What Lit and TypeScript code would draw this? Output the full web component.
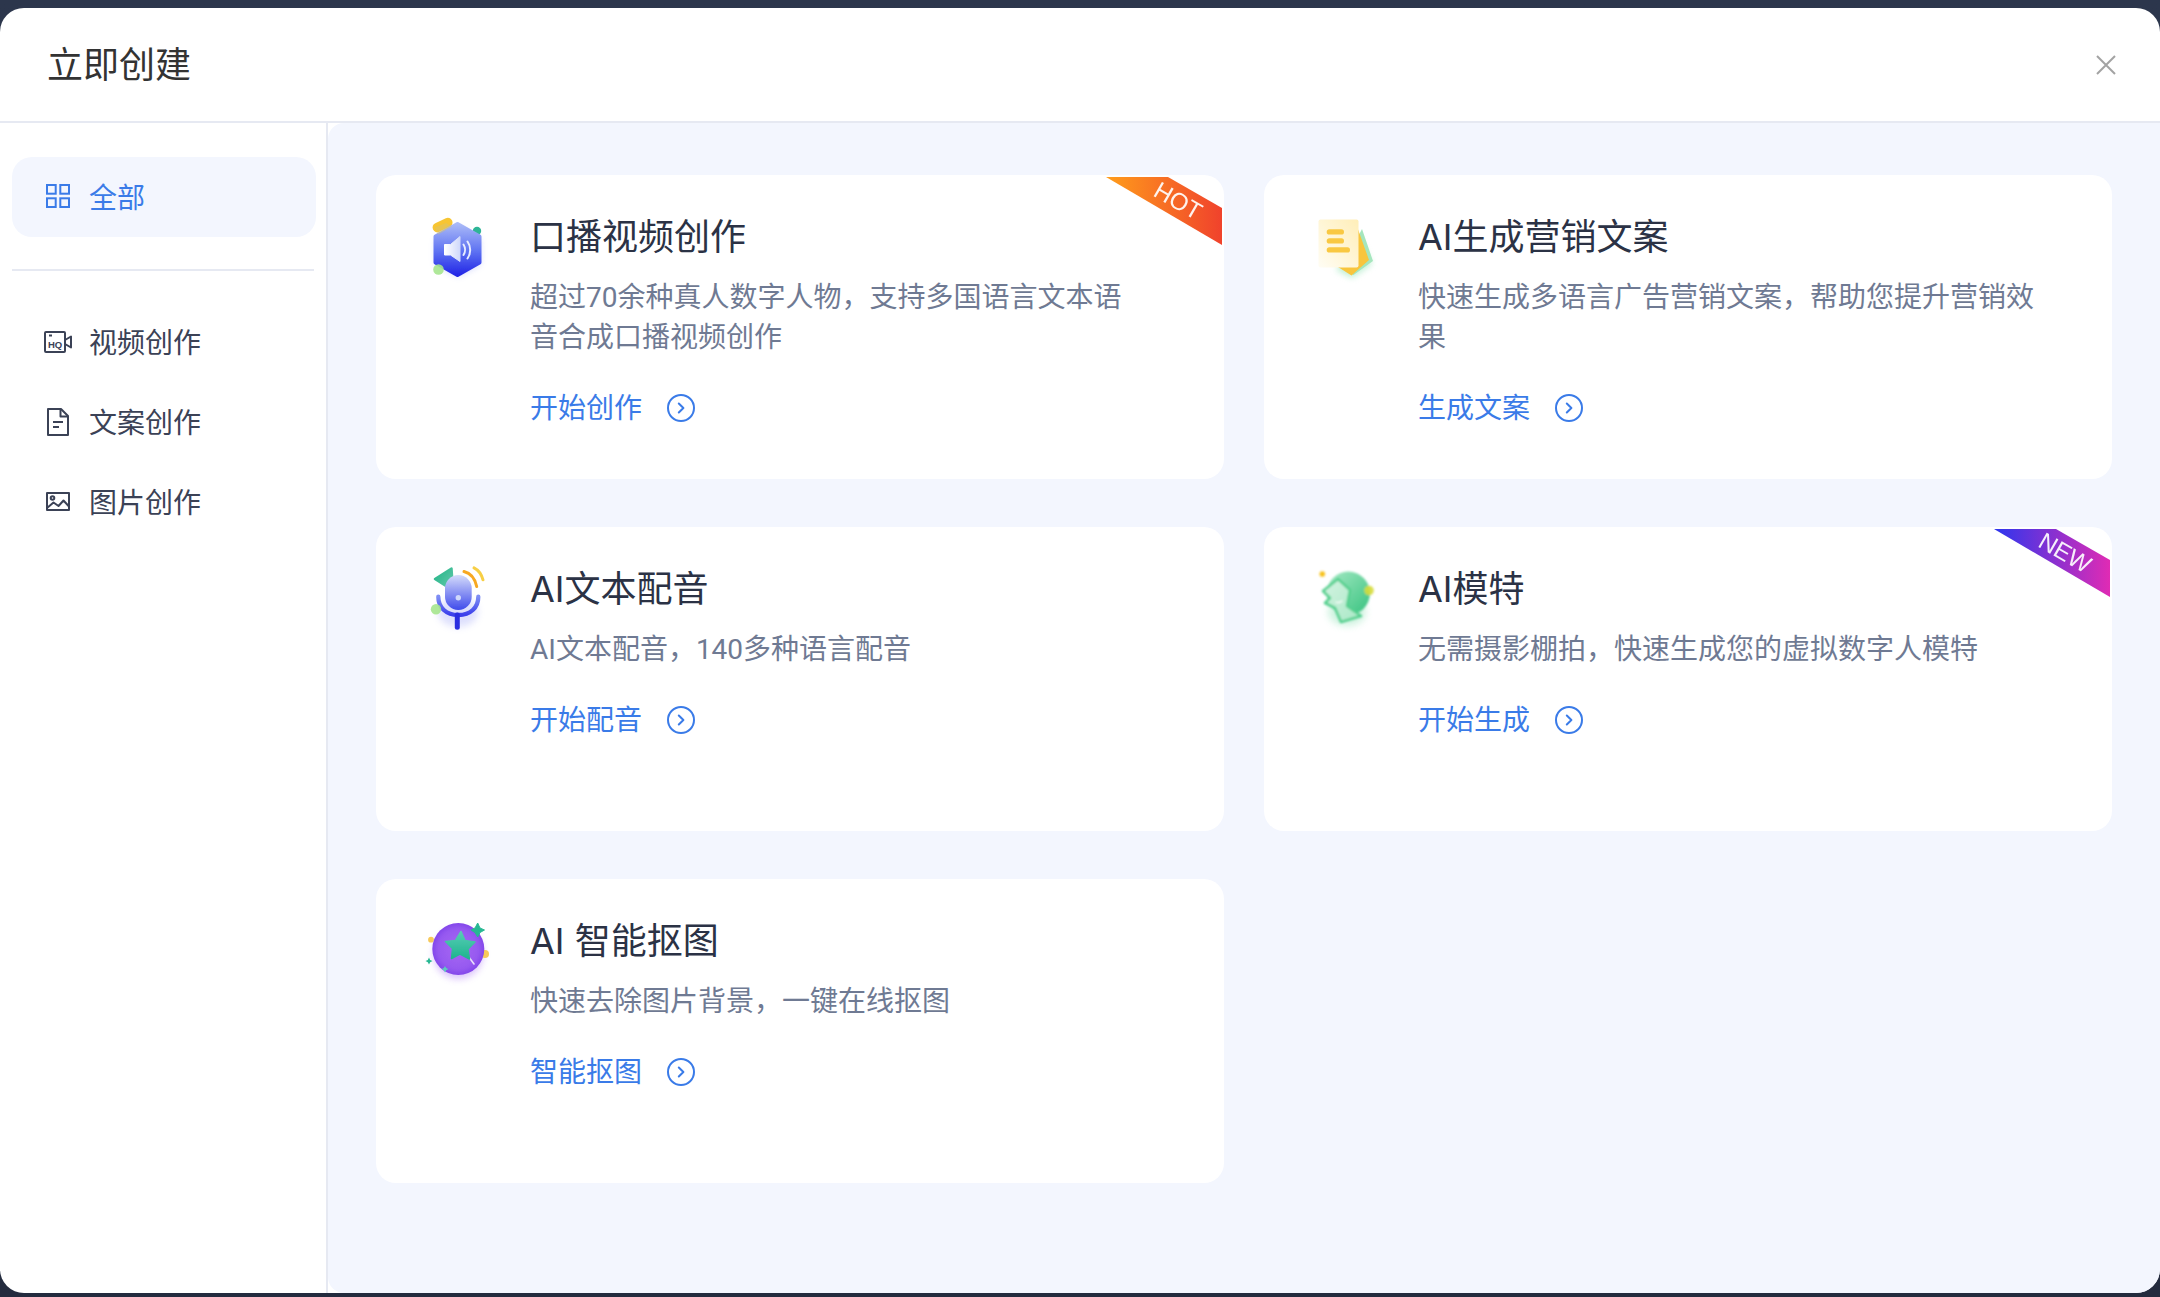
import { LitElement, html, css, svg } from 'lit';
import { customElement } from 'lit/decorators.js';

interface Creation {
  title: string;
  desc: string;
  action: string;
  icon: unknown;
  ribbon?: unknown;
}

const arrowCircle = html`<svg class="arrow" viewBox="0 0 28 28" fill="none" stroke="currentColor" stroke-width="2">
  <circle cx="14" cy="14" r="13" />
  <path d="M11.8 9.5 16.4 14l-4.6 4.5" stroke-linecap="round" stroke-linejoin="round" />
</svg>`;

const voiceIcon = svg`
  <defs>
    <linearGradient id="v-hex" x1="0" y1="0" x2="0" y2="1">
      <stop offset="0" stop-color="#a9b9f7" /><stop offset="0.55" stop-color="#5c70f2" /><stop offset="1" stop-color="#2327e6" />
    </linearGradient>
    <linearGradient id="v-spk" x1="0" y1="0" x2="1" y2="0">
      <stop offset="0" stop-color="#ffffff" /><stop offset="1" stop-color="#cfd8fb" />
    </linearGradient>
    <filter id="v-glow" x="-40%" y="-40%" width="180%" height="180%"><feGaussianBlur stdDeviation="3.5" /></filter>
    <filter id="v-soft"><feGaussianBlur stdDeviation="0.7" /></filter>
  </defs>
  <path d="M34 14 56 26V50L34 62 12 50V26Z" fill="#6f7cf5" opacity=".35" filter="url(#v-glow)" />
  <g filter="url(#v-soft)">
    <circle cx="53" cy="17" r="4.2" fill="#2fb596" />
    <rect x="8" y="6.500" width="21" height="9.500" rx="4.700" transform="rotate(-25 18 11)" fill="#f7c531" />
    <path d="M33.500 10 55.500 22.500V48.500L33.500 61 11.500 48.500V22.500Z" fill="url(#v-hex)" stroke="url(#v-hex)" stroke-width="4" stroke-linejoin="round" />
    <path d="M11 13.500 22 9 28 12.500 14 20.500Z" fill="#d9c46f" opacity=".5" />
    <circle cx="14.500" cy="55.500" r="5.300" fill="#a6e58e" opacity=".9" />
    <path d="M20.500 30.500h6L36 22.500v25L26.500 41h-6z" fill="url(#v-spk)" stroke="url(#v-spk)" stroke-linejoin="round" />
    <path d="M39.500 30.500c2 3 2 7.500 0 10.500M43.500 27.500c3.600 5 3.600 12 0 17" fill="none" stroke="#e8edff" stroke-width="2" stroke-linecap="round" />
  </g>`;

const copyIcon = svg`
  <defs>
    <linearGradient id="c-paper" x1="1" y1="0" x2="0" y2="1">
      <stop offset="0" stop-color="#ffeeb8" /><stop offset="1" stop-color="#fffdf4" />
    </linearGradient>
    <filter id="c-glow" x="-40%" y="-40%" width="180%" height="180%"><feGaussianBlur stdDeviation="3" /></filter>
    <filter id="c-soft"><feGaussianBlur stdDeviation="0.7" /></filter>
  </defs>
  <path d="M46 22 60 50 40 64 24 56Z" fill="#8fe3b0" opacity=".55" filter="url(#c-glow)" />
  <g filter="url(#c-soft)">
    <path d="M50 15 61 47 41.500 61 30 54Z" fill="#a5e6bd" />
    <path d="M45 12.500 57 46 39.500 61.500 26 53Z" fill="#f8c53c" />
    <rect x="6.500" y="5.500" width="40" height="48" rx="2" fill="url(#c-paper)" />
    <rect x="14.700" y="15.300" width="17.300" height="5.300" rx="2.600" fill="#f9c843" />
    <rect x="14.700" y="24.300" width="17.300" height="5.300" rx="2.600" fill="#f9c843" />
    <rect x="14.700" y="33.300" width="23.300" height="5.300" rx="2.600" fill="#f9c843" />
  </g>`;

const micIcon = svg`
  <defs>
    <linearGradient id="m-cap" x1="0" y1="0" x2="0" y2="1">
      <stop offset="0" stop-color="#d5dcfb" /><stop offset="1" stop-color="#3f4beb" />
    </linearGradient>
    <linearGradient id="m-arc" x1="0" y1="0" x2="0" y2="1">
      <stop offset="0" stop-color="#7f8ef4" /><stop offset="1" stop-color="#3a3feb" />
    </linearGradient>
    <linearGradient id="m-tri" x1="0" y1="0" x2="1" y2="1">
      <stop offset="0" stop-color="#22b587" /><stop offset=".8" stop-color="#5cc6a6" /><stop offset="1" stop-color="#8ab9dc" />
    </linearGradient>
    <filter id="m-glow" x="-40%" y="-40%" width="180%" height="180%"><feGaussianBlur stdDeviation="3.500" /></filter>
    <filter id="m-soft"><feGaussianBlur stdDeviation="0.700" /></filter>
  </defs>
  <ellipse cx="34" cy="46" rx="20" ry="15" fill="#7c84f5" opacity=".25" filter="url(#m-glow)" />
  <g filter="url(#m-soft)">
    <path d="M11 13 27.500 2.500 29 24.500Z" fill="url(#m-tri)" stroke="url(#m-tri)" stroke-width="2.500" stroke-linejoin="round" />
    <rect x="21" y="9" width="26.700" height="35" rx="13.300" fill="url(#m-cap)" />
    <circle cx="34.300" cy="31.700" r="2.700" fill="#cfd8fb" />
    <path d="M14.300 30.700c0 11 8 18.300 20 18.300s20-7.300 20-18.300" fill="none" stroke="url(#m-arc)" stroke-width="4.300" stroke-linecap="round" />
    <path d="M33.300 49v12.300" stroke="#2a2fe0" stroke-width="5" stroke-linecap="round" />
    <circle cx="12" cy="43.300" r="5.200" fill="#a6e58e" opacity=".9" />
    <path d="M40 5.500c6 1.500 11 7 12.700 15" fill="none" stroke="#f7a823" stroke-width="3" stroke-linecap="round" />
    <path d="M50 1.800c4 2 7.500 6.500 9 12" fill="none" stroke="#f7cf45" stroke-width="3" stroke-linecap="round" />
  </g>`;

const modelIcon = svg`
  <defs>
    <linearGradient id="h-ball" x1="0" y1="0" x2="1" y2="1">
      <stop offset="0" stop-color="#a6eac4" /><stop offset="1" stop-color="#37c27f" />
    </linearGradient>
    <linearGradient id="h-head" x1="0" y1="0" x2="1" y2="1">
      <stop offset="0" stop-color="#d3f3e1" /><stop offset="1" stop-color="#a9e8c6" />
    </linearGradient>
    <filter id="h-glow" x="-40%" y="-40%" width="180%" height="180%"><feGaussianBlur stdDeviation="3.500" /></filter>
    <filter id="h-soft"><feGaussianBlur stdDeviation="0.800" /></filter>
  </defs>
  <ellipse cx="35" cy="46" rx="19" ry="14" fill="#77dca6" opacity=".35" filter="url(#h-glow)" />
  <g filter="url(#h-soft)">
    <circle cx="10.300" cy="8" r="2.800" fill="#f7c21f" />
    <circle cx="36.300" cy="27.300" r="21.700" fill="url(#h-ball)" />
    <circle cx="57" cy="24.500" r="4.800" fill="#d6dc3b" opacity=".9" />
    <path d="M26 13 11 25 18 32 13 37 23 42 29 56 49 50 35 40 38 24Z" fill="url(#h-head)" stroke="#55d08f" stroke-width="2.600" stroke-linejoin="round" />
    <path d="M24 36c2 1 4 .8 6-1" fill="none" stroke="#ffffff" stroke-width="1.200" stroke-linecap="round" />
  </g>`;

const cutoutIcon = svg`
  <defs>
    <radialGradient id="s-ball" cx=".5" cy=".5" r=".55">
      <stop offset="0" stop-color="#a767f2" /><stop offset=".7" stop-color="#9659f0" /><stop offset="1" stop-color="#7b3fe8" />
    </radialGradient>
    <linearGradient id="s-star" x1="0" y1="0" x2="0" y2="1">
      <stop offset="0" stop-color="#58cdb6" /><stop offset="1" stop-color="#1eb48d" />
    </linearGradient>
    <filter id="s-glow" x="-40%" y="-40%" width="180%" height="180%"><feGaussianBlur stdDeviation="3.500" /></filter>
    <filter id="s-soft"><feGaussianBlur stdDeviation="0.700" /></filter>
  </defs>
  <circle cx="34.300" cy="36" r="25" fill="#a66cf5" opacity=".4" filter="url(#s-glow)" />
  <g filter="url(#s-soft)">
    <circle cx="7" cy="21.700" r="2.900" fill="#f7c95a" />
    <circle cx="61" cy="36" r="4" fill="#f7c95a" />
    <circle cx="34.300" cy="31" r="26" fill="url(#s-ball)" />
    <path d="M53.700 5 56 10 60.500 12 56 14.500 53.700 19 51 14.500 47 12 51 10Z" fill="#28b892" stroke="#28b892" stroke-linejoin="round" />
    <path d="M5 39.500 6.200 42 8.500 43 6.200 44.200 5 46.500 3.800 44.200 1.500 43 3.800 42Z" fill="#28b892" />
    <path d="M21 48 22.200 50 24.500 51 22.200 52.200 21 54.500 19.800 52.200 17.500 51 19.800 50Z" fill="#5dc9c0" />
    <path d="M44.300 38.300 50 46" stroke="#ffffff" stroke-width="1.600" stroke-linecap="round" opacity=".8" />
    <path d="M37 13.500 41 22.500 51 24 44 31 45.500 41 36 36 27.500 40.500 28.500 30.500 21.500 23.500 31.500 22.500Z" fill="url(#s-star)" stroke="url(#s-star)" stroke-width="1.500" stroke-linejoin="round" />
  </g>`;

const hotRibbon = svg`<svg class="ribbon" viewBox="0 0 116 68">
  <defs><linearGradient id="r-hot" x1="0" y1="0" x2="1" y2="0">
    <stop offset="0" stop-color="#ff9d1b" /><stop offset="1" stop-color="#f0422c" />
  </linearGradient></defs>
  <path d="M0 0H62L116 31V68Z" fill="url(#r-hot)" />
  <text x="72" y="32" transform="rotate(30 72 24)" text-anchor="middle">HOT</text>
</svg>`;

const newRibbon = svg`<svg class="ribbon" viewBox="0 0 116 68">
  <defs><linearGradient id="r-new" x1="0" y1="0" x2="1" y2="0">
    <stop offset="0" stop-color="#2c36ee" /><stop offset="1" stop-color="#e02bb4" />
  </linearGradient></defs>
  <path d="M0 0H62L116 31V68Z" fill="url(#r-new)" />
  <text x="71" y="32" transform="rotate(30 71 24)" text-anchor="middle">NEW</text>
</svg>`;

const creations: Creation[] = [
  { title: '口播视频创作', desc: '超过70余种真人数字人物，支持多国语言文本语音合成口播视频创作', action: '开始创作', icon: voiceIcon, ribbon: hotRibbon },
  { title: 'AI生成营销文案', desc: '快速生成多语言广告营销文案，帮助您提升营销效果', action: '生成文案', icon: copyIcon },
  { title: 'AI文本配音', desc: 'AI文本配音，140多种语言配音', action: '开始配音', icon: micIcon },
  { title: 'AI模特', desc: '无需摄影棚拍，快速生成您的虚拟数字人模特', action: '开始生成', icon: modelIcon, ribbon: newRibbon },
  { title: 'AI 智能抠图', desc: '快速去除图片背景，一键在线抠图', action: '智能抠图', icon: cutoutIcon },
];

@customElement('app-root')
export class AppRoot extends LitElement {
  static styles = css`
    :host {
      display: block;
      width: 2160px;
      height: 1297px;
      padding: 8px 0 4px;
      box-sizing: border-box;
      background: linear-gradient(#2c364c, #232b3e);
      font-family: Inter, 'Noto Sans CJK SC', sans-serif;
      overflow: hidden;
    }

    .modal {
      display: flex;
      flex-direction: column;
      height: 100%;
      background: #fff;
      border-radius: 24px;
      overflow: hidden;
    }

    .head {
      flex: none;
      display: flex;
      align-items: center;
      justify-content: space-between;
      height: 113px;
      padding: 0 44px 0 47px;
      border-bottom: 2px solid #e6e9f2;
    }

    .head h1 {
      margin: 0;
      font-size: 36px;
      line-height: 48px;
      font-weight: 400;
      color: #333;
    }

    .close {
      width: 20px;
      height: 20px;
      color: #a3a3a3;
    }

    .body {
      flex: 1;
      display: flex;
      min-height: 0;
    }

    .side {
      flex: none;
      width: 314px;
      padding: 34px 0 0 12px;
      border-right: 2px solid #e6e9f2;
    }

    .item {
      display: flex;
      align-items: center;
      gap: 17px;
      height: 80px;
      padding-left: 32px;
      font-size: 28px;
      color: #3b4256;
      border-radius: 20px;
    }

    .item svg {
      flex: none;
      width: 28px;
      height: 28px;
    }

    .item span {
      padding-bottom: 3px;
    }

    .item.active {
      width: 304px;
      box-sizing: border-box;
      background: #f3f6fe;
      color: #3a7be8;
    }

    .rule {
      height: 2px;
      width: 302px;
      margin: 32px 0 31px;
      background: #e6e9f2;
    }

    .main {
      flex: 1;
      display: grid;
      grid-template-columns: 848px 848px;
      grid-auto-rows: 304px;
      gap: 48px 40px;
      align-content: start;
      padding: 52px 48px 0;
      background: #f3f6fe;
      border-top-left-radius: 16px;
      border-bottom-left-radius: 16px;
    }

    .card {
      position: relative;
      display: flex;
      gap: 34px;
      padding: 38px 48px 0;
      background: #fff;
      border-radius: 20px;
    }

    .icon {
      flex: none;
      width: 72px;
      height: 72px;
      margin-top: 1px;
    }

    .text {
      flex: none;
      width: 618px;
    }

    .text h2 {
      margin: 0;
      font-size: 36px;
      line-height: 48px;
      font-weight: 400;
      color: #2b3245;
    }

    .text p {
      margin: 17px 0 30px;
      font-family: Roboto, 'Noto Sans CJK SC', sans-serif;
      font-size: 28px;
      line-height: 40px;
      color: #6f7a93;
    }

    .link {
      display: flex;
      align-items: center;
      gap: 25px;
      font-size: 28px;
      line-height: 40px;
      color: #3a7be8;
    }

    .arrow {
      width: 28px;
      height: 28px;
    }

    .ribbon {
      position: absolute;
      top: 2px;
      right: 2px;
      width: 116px;
      height: 68px;
      overflow: visible;
    }

    .ribbon text {
      font-family: 'Liberation Sans', Arial, sans-serif;
      font-size: 24px;
      fill: #fff;
      opacity: 0.92;
    }
  `;

  render() {
    return html`
      <div class="modal">
        <header class="head">
          <h1>立即创建</h1>
          <svg class="close" viewBox="0 0 20 20" fill="none" stroke="currentColor" stroke-width="2"><path d="M1 1l18 18M19 1 1 19" /></svg>
        </header>
        <div class="body">
          <nav class="side">
            <div class="item active">
              <svg viewBox="0 0 28 28" fill="none" stroke="currentColor" stroke-width="2">
                <rect x="3" y="2" width="8.700" height="8.700" /><rect x="16.300" y="2" width="8.700" height="8.700" />
                <rect x="3" y="15.300" width="8.700" height="8.700" /><rect x="16.300" y="15.300" width="8.700" height="8.700" />
              </svg>
              <span>全部</span>
            </div>
            <div class="rule"></div>
            <div class="item">
              <svg viewBox="0 0 28 28" fill="none" stroke="currentColor" stroke-width="2">
                <rect x="1" y="4" width="20" height="20" rx="1" />
                <path d="M5 7.500h3" />
                <path d="M21 12l6-3.500v11L21 16" stroke-linejoin="round" />
                <text x="11" y="20" text-anchor="middle" font-family="Liberation Sans, sans-serif" font-size="9.500" font-weight="700" fill="currentColor" stroke="none">HQ</text>
              </svg>
              <span>视频创作</span>
            </div>
            <div class="item">
              <svg viewBox="0 0 28 28" fill="none" stroke="currentColor" stroke-width="2" stroke-linejoin="round">
                <path d="M4 1h13l7 7v19H4z" /><path d="M16.500 1v7.500H24" /><path d="M9 14h10M9 19h6" />
              </svg>
              <span>文案创作</span>
            </div>
            <div class="item">
              <svg viewBox="0 0 28 28" fill="none" stroke="currentColor" stroke-width="2" stroke-linejoin="round">
                <rect x="3" y="5" width="22" height="17" /><circle cx="8.500" cy="10" r="1.800" />
                <path d="M3 20l6.500-5.500 5 3.500 5-5.500 5.500 6" />
              </svg>
              <span>图片创作</span>
            </div>
          </nav>
          <main class="main">
            ${creations.map(
              (c) => html`
                <section class="card">
                  <svg class="icon" viewBox="0 0 72 72">${c.icon}</svg>
                  <div class="text">
                    <h2>${c.title}</h2>
                    <p>${c.desc}</p>
                    <div class="link">${c.action}${arrowCircle}</div>
                  </div>
                  ${c.ribbon ?? ''}
                </section>
              `,
            )}
          </main>
        </div>
      </div>
    `;
  }
}
